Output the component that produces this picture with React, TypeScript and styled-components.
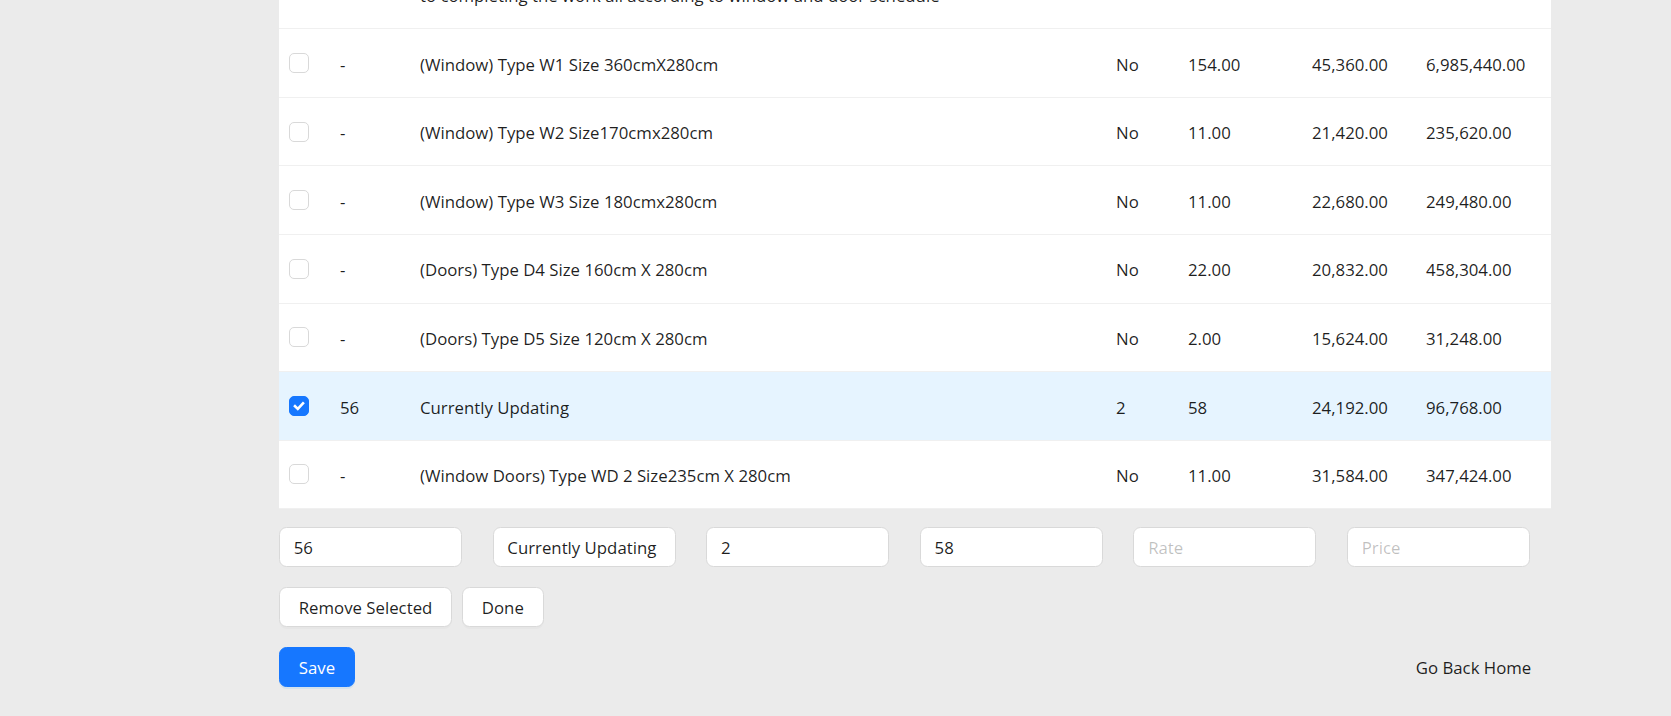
import React from "react"
import styled, { createGlobalStyle } from "styled-components"

interface Item {
   id: string
   description: React.ReactNode
   qty: string
   unit: string
   rate: string
   price: string
   selected?: boolean
}

const GlobalStyle = createGlobalStyle`
   html, body {
      margin: 0;
      padding: 0;
      background: #ebebeb;
   }
   body {
      font-family: "Open Sans", "Noto Sans", sans-serif;
      font-size: 16.8px;
      color: rgba(0, 0, 0, 0.88);
   }
   * {
      box-sizing: border-box;
   }
`

// the page is scrolled: the top of the first row lies above the window
const Page = styled.div`
   margin-top: -94.4px;
   padding: 0 120px 28px 279px;
`

const Card = styled.div`
   background: #fff;
`

const Table = styled.table`
   width: 100%;
   border-collapse: collapse;
   table-layout: fixed;
`

const Row = styled.tr<{ $selected?: boolean }>`
   background: ${({ $selected }) => ($selected ? "#e6f4ff" : "#fff")};
`

const Cell = styled.td`
   padding: 21.5px 20px 18.5px;
   line-height: 27.57px;
   border-bottom: 1px solid #f0f0f0;
   vertical-align: middle;
   white-space: nowrap;
`

const SelectCell = styled(Cell)`
   padding: 0 10px;
`

const Box = styled.span<{ $checked?: boolean }>`
   display: flex;
   align-items: center;
   justify-content: center;
   width: 20px;
   height: 20px;
   border-radius: 5px;
   border: 1px solid ${({ $checked }) => ($checked ? "#1677ff" : "#d9d9d9")};
   background: ${({ $checked }) => ($checked ? "#1677ff" : "#fff")};
`

const Fields = styled.div`
   display: grid;
   grid-template-columns: repeat(6, 183px);
   column-gap: 30.6px;
   margin-top: 18px;
`

const Field = styled.input`
   height: 40px;
   width: 100%;
   padding: 1px 13.75px 0;
   border: 1px solid #d9d9d9;
   border-radius: 7.5px;
   background: #fff;
   font: inherit;
   font-size: 16.8px;
   color: rgba(0, 0, 0, 0.88);
   outline: none;
   &::placeholder {
      color: rgba(0, 0, 0, 0.25);
   }
`

const Actions = styled.div`
   display: flex;
   gap: 10px;
   margin-top: 19.5px;
`

const Button = styled.button<{ $variant?: "default" | "primary" | "text" }>`
   height: 40px;
   padding: 1px 18.75px 0;
   border-radius: 7.5px;
   font: inherit;
   font-size: 16.8px;
   cursor: pointer;
   border: 1px solid
      ${({ $variant }) =>
         $variant === "primary" ? "#1677ff" : $variant === "text" ? "transparent" : "#d9d9d9"};
   background: ${({ $variant }) =>
      $variant === "primary" ? "#1677ff" : $variant === "text" ? "transparent" : "#fff"};
   color: ${({ $variant }) => ($variant === "primary" ? "#fff" : "rgba(0, 0, 0, 0.88)")};
   box-shadow: ${({ $variant }) =>
      $variant === "primary"
         ? "0 2px 0 rgba(5, 145, 255, 0.1)"
         : $variant === "text"
         ? "none"
         : "0 2px 0 rgba(0, 0, 0, 0.02)"};
`

const Footer = styled.div`
   display: flex;
   justify-content: space-between;
   align-items: center;
   margin-top: 20px;
`

const Check = () => (
   <svg width="14" height="14" viewBox="0 0 14 14" fill="none">
      <path d="M3 7.2 L5.8 9.9 L11 4.3" stroke="#fff" strokeWidth="2.6" strokeLinecap="square" />
   </svg>
)

const items: Item[] = [
   {
      id: "-",
      description: (
         <>
            Supply, fabricate and install aluminium windows and doors with glazing,
            <br />
            hardware, sealants, fixings and all other accessories necessary
            <br />
            to completing the work all according to window and door schedule
         </>
      ),
      qty: "",
      unit: "",
      rate: "",
      price: "",
   },
   { id: "-", description: "(Window) Type W1 Size 360cmX280cm", qty: "No", unit: "154.00", rate: "45,360.00", price: "6,985,440.00" },
   { id: "-", description: "(Window) Type W2 Size170cmx280cm", qty: "No", unit: "11.00", rate: "21,420.00", price: "235,620.00" },
   { id: "-", description: "(Window) Type W3 Size 180cmx280cm", qty: "No", unit: "11.00", rate: "22,680.00", price: "249,480.00" },
   { id: "-", description: "(Doors) Type D4 Size 160cm X 280cm", qty: "No", unit: "22.00", rate: "20,832.00", price: "458,304.00" },
   { id: "-", description: "(Doors) Type D5 Size 120cm X 280cm", qty: "No", unit: "2.00", rate: "15,624.00", price: "31,248.00" },
   { id: "56", description: "Currently Updating", qty: "2", unit: "58", rate: "24,192.00", price: "96,768.00", selected: true },
   { id: "-", description: "(Window Doors) Type WD 2 Size235cm X 280cm", qty: "No", unit: "11.00", rate: "31,584.00", price: "347,424.00" },
]

const widths = [41, 80, 696, 72, 124, 114, 145]

export default function App() {
   return (
      <>
         <GlobalStyle />
         <Page>
            <Card>
               <Table>
                  <colgroup>
                     {widths.map((w, i) => (
                        <col key={i} style={{ width: w }} />
                     ))}
                  </colgroup>
                  <tbody>
                     {items.map((item, i) => (
                        <Row key={i} $selected={item.selected}>
                           <SelectCell>
                              <Box $checked={item.selected}>{item.selected && <Check />}</Box>
                           </SelectCell>
                           <Cell>{item.id}</Cell>
                           <Cell>{item.description}</Cell>
                           <Cell>{item.qty}</Cell>
                           <Cell>{item.unit}</Cell>
                           <Cell>{item.rate}</Cell>
                           <Cell>{item.price}</Cell>
                        </Row>
                     ))}
                  </tbody>
               </Table>
            </Card>

            <Fields>
               <Field defaultValue="56" />
               <Field defaultValue="Currently Updating" />
               <Field defaultValue="2" />
               <Field defaultValue="58" />
               <Field placeholder="Rate" />
               <Field placeholder="Price" />
            </Fields>

            <Actions>
               <Button>Remove Selected</Button>
               <Button>Done</Button>
            </Actions>

            <Footer>
               <Button $variant="primary">Save</Button>
               <Button $variant="text">Go Back Home</Button>
            </Footer>
         </Page>
      </>
   )
}
